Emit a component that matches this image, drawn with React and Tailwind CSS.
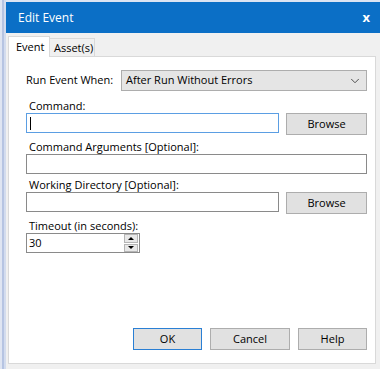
import { ChevronDown } from "lucide-react";

const font = { fontFamily: '"Open Sans", "Noto Sans", Arial, sans-serif' };

function Label({ children, className = "" }) {
  return (
    <div className={"h-[15px] pl-[3px] text-[11px] leading-[15px] text-black " + className}>
      {children}
    </div>
  );
}

function TextBox({ width, focused = false, children }) {
  return (
    <div
      className={
        "flex h-[20px] items-center border bg-white pl-[3px] " +
        (focused ? "border-[#5b9ee3]" : "border-[#8a8a8a]")
      }
      style={{ width }}
    >
      {children}
    </div>
  );
}

function Button({ children, width, primary = false }) {
  return (
    <button
      type="button"
      className={
        "flex h-[22px] items-center justify-center bg-[#e1e1e1] text-[11px] text-black " +
        (primary ? "border border-[#2a7fd4]" : "border border-[#adadad]")
      }
      style={{ width }}
    >
      {children}
    </button>
  );
}

export default function App() {
  return (
    <div className="flex h-[369px] w-[380px] bg-[#f0f0f0]" style={font}>
      <div className="flex h-full w-[6px]">
        <div className="w-[2px] bg-[#dfe5f2]" />
        <div className="w-[2px] bg-[#b6c4e2]" />
        <div className="w-[2px] bg-[#d3dcee]" />
      </div>

      <div className="flex min-w-0 flex-1 flex-col">
        <div className="h-[2px] bg-[#dbe4f3]" />
        <div className="flex h-[31px] items-center justify-between bg-[#0b6fc6] pl-[12px] pr-[10px] text-white">
          <span className="text-[12px]">Edit Event</span>
          <span className="text-[13px] font-bold leading-none">x</span>
        </div>

        <div className="flex flex-1 flex-col pb-[5px] pl-[2px] pr-[4px] pt-[2px]">
          <div className="relative z-10 flex h-[21px] items-end">
            <div className="-mb-px flex h-[21px] w-[42px] items-start border border-b-0 border-[#d9d9d9] bg-white pl-[7px] pt-[2px] text-[11px] text-black">
              Event
            </div>
            <div className="flex h-[18px] w-[45px] items-start border border-b-0 border-l-0 border-[#d9d9d9] bg-[#f0f0f0] pl-[4px] pt-[1px] text-[11px] text-black">
              Asset(s)
            </div>
          </div>

          <div className="flex flex-1 flex-col border border-[#d9d9d9] bg-white pl-[17px] pr-[8px] pt-[13px] pb-[13px]">
            <div className="flex h-[21px] items-center">
              <span className="w-[95px] text-[11px] text-black">Run Event When:</span>
              <div className="flex h-[21px] flex-1 items-center justify-between border border-[#adadad] bg-[#e5e5e5] pl-[4px] pr-[4px] text-[11px] text-black">
                <span>After Run Without Errors</span>
                <ChevronDown size={14} strokeWidth={1.6} className="text-[#444]" />
              </div>
            </div>

            <Label className="mt-[7px]">Command:</Label>
            <div className="flex gap-[7px]">
              <TextBox width={253} focused>
                <div className="h-[13px] w-px bg-black" />
              </TextBox>
              <Button width={81}>Browse</Button>
            </div>

            <Label className="mt-[4px]">Command Arguments [Optional]:</Label>
            <TextBox width={341} />

            <Label className="mt-[3px]">Working Directory [Optional]:</Label>
            <div className="flex gap-[7px]">
              <TextBox width={253} />
              <Button width={81}>Browse</Button>
            </div>

            <Label className="mt-[4px]">Timeout (in seconds):</Label>
            <div className="flex h-[20px] w-[114px] items-center justify-between border border-[#8a8a8a] bg-white pl-[2px] pr-px">
              <span className="text-[11px] text-black">30</span>
              <div className="flex h-[18px] w-[14px] flex-col gap-px">
                <div className="flex flex-1 items-center justify-center border border-[#b5b5b5] bg-[#e8e8e8]">
                  <div className="h-0 w-0 border-x-[3px] border-b-[3px] border-x-transparent border-b-black" />
                </div>
                <div className="flex flex-1 items-center justify-center border border-[#b5b5b5] bg-[#e8e8e8]">
                  <div className="h-0 w-0 border-x-[3px] border-t-[3px] border-x-transparent border-t-black" />
                </div>
              </div>
            </div>

            <div className="mt-auto flex justify-end gap-[8px]">
              <Button width={69} primary>OK</Button>
              <Button width={80}>Cancel</Button>
              <Button width={69}>Help</Button>
            </div>
          </div>
        </div>
      </div>
    </div>
  );
}
